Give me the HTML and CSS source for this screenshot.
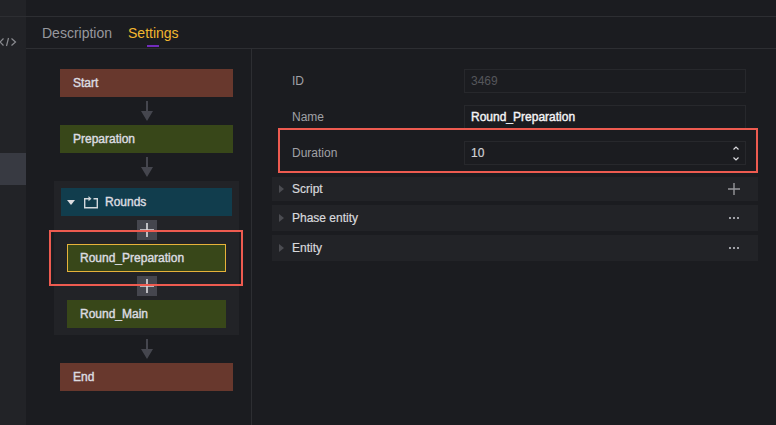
FILE: index.html
```html
<!DOCTYPE html>
<html lang="en">
<head>
<meta charset="utf-8">
<title>Settings</title>
<link rel="stylesheet" href="styles.css">
</head>
<body>
<div class="topbar"><div class="topbar-side"></div></div>
<div class="app">
  <aside class="rail">
    <button class="rail-item" aria-label="Code">
      <svg width="17" height="10" viewBox="0 0 17 10"><path d="M3.5 1.5 0 5l3.5 3.5M8.5 1 6.5 9M11.5 1.5 15.5 5l-4 3.5"/></svg>
    </button>
    <button class="rail-item selected" aria-label="Phases"></button>
  </aside>
  <main class="main">
    <nav class="tabs">
      <a class="tab" href="#description">Description</a>
      <a class="tab active" href="#settings">Settings</a>
    </nav>
    <div class="content">
      <section class="flow">
        <button class="node edge">Start</button>
        <svg class="arrow" width="12" height="20" viewBox="0 0 12 20"><path d="M5 0h2v10h5L6 20 0 10h5z"/></svg>
        <button class="node phase">Preparation</button>
        <svg class="arrow" width="12" height="20" viewBox="0 0 12 20"><path d="M5 0h2v10h5L6 20 0 10h5z"/></svg>
        <div class="group">
          <button class="node rounds">
            <svg class="caret" width="8" height="5" viewBox="0 0 8 5"><path d="M0 0h8L4 5z"/></svg>
            <svg class="loop" width="15" height="13" viewBox="0 0 15 13"><path d="M5 2.7H.7v9.1h12.6V2.7H9.5"/><path class="head" d="M4.5 0 7.5 2.7l-3 2.6z"/></svg>
            Rounds
          </button>
          <button class="add" aria-label="Add phase"><svg width="14" height="14" viewBox="0 0 14 14"><path d="M7 0v14M0 7h14"/></svg></button>
          <div class="slot">
            <button class="node phase current">Round_Preparation</button>
            <div class="mark mark-phase"></div>
          </div>
          <button class="add" aria-label="Add phase"><svg width="14" height="14" viewBox="0 0 14 14"><path d="M7 0v14M0 7h14"/></svg></button>
          <div class="slot"><button class="node phase">Round_Main</button></div>
        </div>
        <svg class="arrow" width="12" height="20" viewBox="0 0 12 20"><path d="M5 0h2v10h5L6 20 0 10h5z"/></svg>
        <button class="node edge">End</button>
      </section>
      <section class="details">
        <div class="field">
          <label for="id">ID</label>
          <div class="box"><input id="id" value="3469" disabled></div>
        </div>
        <div class="field">
          <label for="name">Name</label>
          <div class="box"><input id="name" class="strong" value="Round_Preparation"></div>
        </div>
        <div class="field">
          <label for="duration">Duration</label>
          <div class="box">
            <input id="duration" class="value" value="10" inputmode="numeric">
            <div class="stepper">
              <button aria-label="Increase"><svg width="6" height="4" viewBox="0 0 6 4"><path d="M.5 3.5 3 1l2.5 2.5"/></svg></button>
              <button aria-label="Decrease"><svg width="6" height="4" viewBox="0 0 6 4"><path d="M.5.5 3 3 5.5.5"/></svg></button>
            </div>
          </div>
          <div class="mark mark-field"></div>
        </div>
        <div class="panels">
          <div class="panel short">
            <button class="panel-title"><svg width="5" height="8" viewBox="0 0 5 8"><path d="M0 0l5 4-5 4z"/></svg>Script</button>
            <button class="action" aria-label="Add script"><svg width="12" height="12" viewBox="0 0 12 12"><path d="M6 0v12M0 6h12"/></svg></button>
          </div>
          <div class="panel">
            <button class="panel-title"><svg width="5" height="8" viewBox="0 0 5 8"><path d="M0 0l5 4-5 4z"/></svg>Phase entity</button>
            <button class="action dots" aria-label="More"><svg width="12" height="2" viewBox="0 0 12 2"><path d="M1 0h2v2H1zM5 0h2v2H5zM9 0h2v2H9z"/></svg></button>
          </div>
          <div class="panel">
            <button class="panel-title"><svg width="5" height="8" viewBox="0 0 5 8"><path d="M0 0l5 4-5 4z"/></svg>Entity</button>
            <button class="action dots" aria-label="More"><svg width="12" height="2" viewBox="0 0 12 2"><path d="M1 0h2v2H1zM5 0h2v2H5zM9 0h2v2H9z"/></svg></button>
          </div>
        </div>
      </section>
    </div>
  </main>
</div>
</body>
</html>
```
FILE: styles.css
```css
* { box-sizing: border-box; }
body {
  margin: 0;
  min-height: 100vh;
  display: flex;
  flex-direction: column;
  background: #1b1c20;
  color: #a0a1a6;
  font: 12px/16px "Liberation Sans", Arial, sans-serif;
  overflow: hidden;
}
button, input { font: inherit; color: inherit; background: none; border: 0; padding: 0; margin: 0; border-radius: 0; }
button { cursor: pointer; }
svg { display: block; flex: none; }

.topbar { height: 17px; border-bottom: 1px solid #2d2e32; }
.topbar-side { width: 26px; height: 100%; background: #222327; }
.app { flex: 1; display: flex; }
.rail { width: 26px; background: #222327; }
.rail-item { display: flex; align-items: center; width: 100%; height: 32px; margin-top: 9px; }
.rail-item svg { fill: none; stroke: #8a8b90; stroke-width: 1.2; }
.rail-item.selected { margin-top: 95px; background: #383a42; }

.main { flex: 1; min-width: 0; display: flex; flex-direction: column; }
.tabs { display: flex; gap: 16px; height: 32px; padding: 0 16px; border-bottom: 1px solid #2d2e32; font-size: 14px; }
.tab { display: flex; flex-direction: column; align-items: center; justify-content: space-between; height: 30px; padding-top: 8px; color: #97989d; text-decoration: none; }
.tab.active { color: #f3b72f; }
.tab.active::after { content: ""; width: 12px; height: 2px; background: #722cbc; }

.content { flex: 1; display: flex; }
.flow { width: 226px; padding: 20px 12px 20px 28px; border-right: 1px solid #2d2e32; display: flex; flex-direction: column; align-items: center; gap: 4px; }
.node { display: flex; align-items: center; width: 100%; height: 28px; padding: 0 13px; color: #dcdce0; -webkit-text-stroke: 0.4px currentColor; }
.flow > .node { width: 173px; }
.edge { background: #68382d; }
.phase { background: #384719; }
.rounds { background: #113d4d; padding: 0 6px; }
.current { border: 1px solid #e6b23a; padding: 0 12px; }
.arrow { fill: #45464e; }
.caret { fill: #dcdce0; margin-right: 9px; }
.loop { fill: none; stroke: #d2d8dc; stroke-width: 1.4; margin-right: 6px; }
.loop .head { fill: #d2d8dc; stroke: none; }
.group { width: 185px; padding: 7px; background: #222327; display: flex; flex-direction: column; align-items: center; gap: 4px; }
.slot { position: relative; width: 100%; padding: 0 6px; }
.add { display: flex; align-items: center; justify-content: center; width: 20px; height: 20px; background: #45464e; }
.add svg { fill: none; stroke: #dcdce0; stroke-width: 1.6; }
.mark { position: absolute; border: 2px solid #ee5b50; pointer-events: none; z-index: 1; }
.mark-phase { inset: -14px -11px -14px -12px; }
.mark-field { inset: -13px 0 -8px 6px; }

.details { flex: 1; min-width: 0; padding: 20px 18px 20px 20px; display: flex; flex-direction: column; gap: 12px; }
.field { position: relative; display: flex; align-items: center; padding: 0 12px 0 20px; }
.field label { flex: 0 0 172px; }
.box { flex: 1; min-width: 0; height: 24px; display: flex; border: 1px solid #27282c; }
.box input { flex: 1; min-width: 0; padding: 0 6px; outline: 0; }
.box input:disabled { color: #55565b; }
.box .strong { color: #f4f4f6; -webkit-text-stroke: 0.4px currentColor; }
.box .value { color: #d2d2d6; -webkit-text-stroke: 0.2px currentColor; }
.stepper { width: 18px; display: flex; flex-direction: column; }
.stepper button { flex: 1; display: flex; align-items: center; justify-content: center; }
.stepper svg { fill: none; stroke: #dcdce0; stroke-width: 1.2; }
.panels { display: flex; flex-direction: column; gap: 4px; }
.panel { display: flex; align-items: center; height: 26px; padding-right: 18px; background: #222327; }
.panel.short { height: 24px; }
.panel-title { flex: 1; height: 100%; display: flex; align-items: center; gap: 8px; padding-left: 7px; color: #d8d8dc; text-align: left; -webkit-text-stroke: 0.2px currentColor; }
.panel-title svg { fill: #4b4c51; stroke: none; }
.action svg { fill: none; stroke: #96979b; stroke-width: 1.4; }
.dots svg { fill: #a0a1a6; stroke: none; }
```
